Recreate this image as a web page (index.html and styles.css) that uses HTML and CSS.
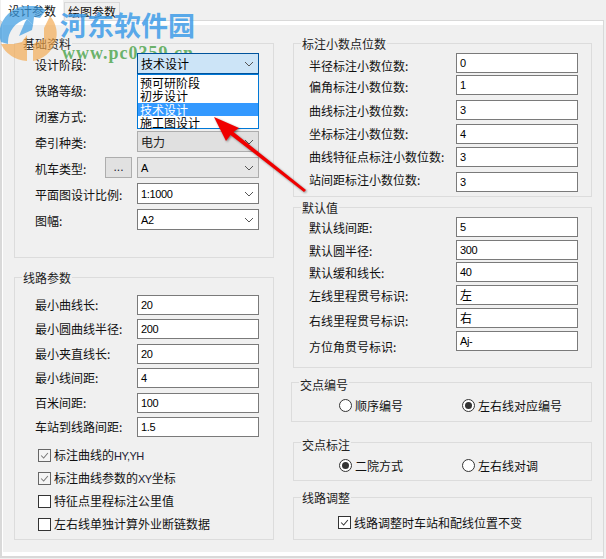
FILE: index.html
```html
<!DOCTYPE html>
<html lang="zh">
<head>
<meta charset="utf-8">
<title>设计参数</title>
<link rel="stylesheet" href="styles.css">
</head>
<body>
<div class="page">
  <div class="tabs">
    <div class="tab tab-active">设计参数</div>
    <div class="tab">绘图参数</div>
  </div>
  <div class="panel">
    <div class="inner">
      <div class="col col-left">
        <section class="group g-basic">
          <div class="legend">基础资料</div>
          <div class="rows rows-basic">
            <div class="row"><span class="label">设计阶段:</span><div class="select focused"><span>技术设计</span><svg class="chev" viewBox="0 0 10 6"><path d="M1 1l4 4 4-4"/></svg>
              <div class="dropdown">
                <div class="opt">预可研阶段</div>
                <div class="opt">初步设计</div>
                <div class="opt opt-on">技术设计</div>
                <div class="opt">施工图设计</div>
              </div>
            </div></div>
            <div class="row"><span class="label">铁路等级:</span><div class="select"></div></div>
            <div class="row"><span class="label">闭塞方式:</span><div class="select"></div></div>
            <div class="row"><span class="label">牵引种类:</span><div class="select disabled"><span>电力</span><svg class="chev" viewBox="0 0 10 6"><path d="M1 1l4 4 4-4"/></svg></div></div>
            <div class="row"><span class="label label-short">机车类型:</span><div class="btn">...</div><div class="select soft"><span class="num">A</span><svg class="chev" viewBox="0 0 10 6"><path d="M1 1l4 4 4-4"/></svg></div></div>
            <div class="row"><span class="label">平面图设计比例:</span><div class="select"><span class="num">1:1000</span><svg class="chev" viewBox="0 0 10 6"><path d="M1 1l4 4 4-4"/></svg></div></div>
            <div class="row"><span class="label">图幅:</span><div class="select"><span class="num">A2</span><svg class="chev" viewBox="0 0 10 6"><path d="M1 1l4 4 4-4"/></svg></div></div>
          </div>
        </section>
        <section class="group g-line">
          <div class="legend">线路参数</div>
          <div class="rows rows-line">
            <div class="row row-input"><span class="label">最小曲线长:</span><div class="input num">20</div></div>
            <div class="row row-input"><span class="label">最小圆曲线半径:</span><div class="input num">200</div></div>
            <div class="row row-input"><span class="label">最小夹直线长:</span><div class="input num">20</div></div>
            <div class="row row-input"><span class="label">最小线间距:</span><div class="input num">4</div></div>
            <div class="row row-input"><span class="label">百米间距:</span><div class="input num">100</div></div>
            <div class="row row-input"><span class="label">车站到线路间距:</span><div class="input num">1.5</div></div>
          </div>
          <div class="checks">
            <div class="check"><span class="box box-soft"><svg viewBox="0 0 13 13"><path d="M2.5 6.5l3 3 5-6"/></svg></span><span>标注曲线的<span class="latin">HY,YH</span></span></div>
            <div class="check"><span class="box box-soft"><svg viewBox="0 0 13 13"><path d="M2.5 6.5l3 3 5-6"/></svg></span><span>标注曲线参数的<span class="latin">XY</span>坐标</span></div>
            <div class="check"><span class="box"></span><span>特征点里程标注公里值</span></div>
            <div class="check"><span class="box"></span><span>左右线单独计算外业断链数据</span></div>
          </div>
        </section>
      </div>
      <div class="col col-right">
        <section class="group g-decimals">
          <div class="legend">标注小数点位数</div>
          <div class="rows rows-right">
            <div class="row row-r"><span class="label label-r lo3">半径标注小数位数:</span><div class="input num">0</div></div>
            <div class="row row-r mt2"><span class="label label-r lo2">偏角标注小数位数:</span><div class="input num">1</div></div>
            <div class="row row-r mt5"><span class="label label-r lo1">曲线标注小数位数:</span><div class="input num">3</div></div>
            <div class="row row-r mt4"><span class="label label-r">坐标标注小数位数:</span><div class="input num">4</div></div>
            <div class="row row-r mt3"><span class="label label-r">曲线特征点标注小数位数:</span><div class="input num">3</div></div>
            <div class="row row-r mt5"><span class="label label-r hi2">站间距标注小数位数:</span><div class="input num">3</div></div>
          </div>
        </section>
        <section class="group g-default">
          <div class="legend">默认值</div>
          <div class="rows rows-right">
            <div class="row row-r"><span class="label label-r lo1">默认线间距:</span><div class="input num">5</div></div>
            <div class="row row-r mt3"><span class="label label-r lo1">默认圆半径:</span><div class="input num">300</div></div>
            <div class="row row-r mt2"><span class="label label-r lo1">默认缓和线长:</span><div class="input num">40</div></div>
            <div class="row row-r mt3"><span class="label label-r lo1">左线里程贯号标识:</span><div class="input">左</div></div>
            <div class="row row-r mt3"><span class="label label-r lo3">右线里程贯号标识:</span><div class="input">右</div></div>
            <div class="row row-r mt3"><span class="label label-r lo6">方位角贯号标识:</span><div class="input num">Aj-</div></div>
          </div>
        </section>
        <section class="group g-node">
          <div class="legend legend-low">交点编号</div>
          <div class="radios radios-node">
            <div class="radio-item"><span class="radio"></span><span>顺序编号</span></div>
            <div class="radio-item"><span class="radio radio-on"></span><span>左右线对应编号</span></div>
          </div>
        </section>
        <section class="group g-mark">
          <div class="legend legend-low">交点标注</div>
          <div class="radios radios-mark">
            <div class="radio-item"><span class="radio radio-on"></span><span>二院方式</span></div>
            <div class="radio-item"><span class="radio"></span><span>左右线对调</span></div>
          </div>
        </section>
        <section class="group g-adjust">
          <div class="legend">线路调整</div>
          <div class="check check-adjust"><span class="box"><svg viewBox="0 0 13 13"><path d="M2.5 6.5l3 3 5-6"/></svg></span><span>线路调整时车站和配线位置不变</span></div>
        </section>
      </div>
    </div>
  </div>

  <div class="watermark">
    <svg class="wm-logo" viewBox="0 0 62 56">
      <path class="wm-blue" d="M1 36A30 28 0 0 1 46 4L40 12 34 11 33 19 27 13A24 24 0 0 0 8 38Z"/>
      <path class="wm-blue" d="M27 13L33 19 32 24 19 30 25 16Z"/>
      <path class="wm-orange" d="M1 38L14 38 22 36 27 29 27 55A30 28 0 0 1 1 38Z"/>
      <path class="wm-orange" d="M33 55L33 38 44 33 44 22 50 10A30 28 0 0 1 33 55Z"/>
    </svg>
    <div class="wm-title">河东软件园</div>
    <div class="wm-url">www.pc0359.cn</div>
  </div>

  <svg class="arrow" viewBox="0 0 110 90">
    <path d="M8 12L33 23 27.500 27 100 85 98 87 24.500 30 20 36Z"/>
  </svg>
</div>
</body>
</html>
```
FILE: styles.css
```css
* { box-sizing: border-box; }
html, body { margin: 0; padding: 0; }
body {
  width: 606px;
  height: 559px;
  overflow: hidden;
  background: #f0f0f0;
  color: #111;
  font-family: "Noto Sans CJK SC", "Liberation Sans", sans-serif;
  font-size: 12px;
  line-height: 14px;
}
.page { position: relative; width: 606px; height: 559px; }

/* tabs */
.tabs { display: flex; height: 21px; padding-left: 1px; }
.tab {
  width: 56px;
  margin-top: 2px;
  margin-left: 1px;
  border: 1px solid #d9d9d9;
  border-bottom: 0;
  text-align: center;
  line-height: 18px;
}
.tab-active {
  width: 62px;
  margin-top: 0;
  margin-left: 0;
  background: #fff;
  border-color: #fff;
  line-height: 20px;
  position: relative;
  z-index: 1;
}

/* panel */
.panel {
  width: 604px;
  height: 538px;
  margin-top: -1px;
  border: 1px solid #d9d9d9;
  border-left-width: 2px;
  border-bottom-width: 2px;
}
.inner {
  display: flex;
  gap: 19px;
  height: 100%;
  padding: 18px 0 0 11px;
  border: solid #fff;
  border-width: 4px 0 4px 1px;
}
.col { display: flex; flex-direction: column; }
.col-left { width: 260px; }
.col-right { width: 299px; }

/* groups */
.group { border: 1px solid #dcdcdc; }
.legend {
  width: fit-content;
  margin: -7px 0 0 7px;
  padding: 0 1px;
  background: #f0f0f0;
  color: #222;
}
.legend-low { margin-top: -5px; }
.g-basic { height: 215px; }
.g-line { height: 263px; margin-top: 19px; }
.g-decimals { height: 154px; }
.g-default { height: 161px; margin-top: 10px; }
.g-node { height: 40px; margin-top: 14px; margin-left: -2px; }
.g-mark { height: 39px; margin-top: 20px; }
.g-adjust { height: 43px; margin-top: 16px; }

/* rows */
.rows { display: flex; flex-direction: column; padding-left: 20px; }
.rows-basic { margin-top: 2px; gap: 5px; }
.rows-line { margin-top: 10px; gap: 4.4px; }
.rows-right { margin-top: 2px; padding-left: 15px; }
.row { display: flex; align-items: center; height: 21px; }
.row-input, .row-r { height: 20px; }
.label { flex: none; width: 102px; white-space: nowrap; }
.rows-basic .label { padding-top: 3px; }
.rows-basic .label-short { width: 70px; }
.label-r { width: 147px; }
.lo1 { padding-top: 2px; }
.lo2 { padding-top: 4px; }
.lo3 { padding-top: 6px; }
.lo6 { padding-top: 12px; }
.hi2 { padding-bottom: 4px; }
.mt2 { margin-top: 2px; }
.mt3 { margin-top: 3px; }
.mt4 { margin-top: 4px; }
.mt5 { margin-top: 5px; }

/* controls */
.input, .select {
  flex: none;
  width: 122px;
  height: 100%;
  display: flex;
  align-items: center;
  padding-left: 3px;
  background: #fff;
  border: 1px solid #7a7a7a;
  white-space: nowrap;
  color: #000;
}
.select { position: relative; z-index: 2; }
.select span { flex: 1; }
.num {
  font-family: "Liberation Sans", sans-serif;
  font-size: 11px;
  letter-spacing: -0.35px;
}
.latin {
  font-family: "Liberation Sans", sans-serif;
  font-size: 11px;
  letter-spacing: -0.5px;
  color: #223;
}
.chev { flex: none; width: 10px; height: 6px; margin-right: 4px; }
.chev path { fill: none; stroke: #555; stroke-width: 1; }
.focused { background: #cce4f7; border-color: #00539c; z-index: 4; }
.disabled { background: #e0e0e0; border-color: #adadad; color: #222; }
.soft { background: #e6e6e6; border-color: #adadad; }
.btn {
  flex: none;
  width: 27px;
  height: 21px;
  margin: -1px 5px 0 0;
  background: #e1e1e1;
  border: 1px solid #adadad;
  text-align: center;
  font-family: "Liberation Sans", sans-serif;
  line-height: 19px;
  color: #223;
}

/* dropdown */
.dropdown {
  position: absolute;
  left: -1px;
  top: 20px;
  width: 122px;
  height: 55px;
  padding-top: 1px;
  background: #fff;
  border: 1px solid #0078d7;
}
.opt { height: 13.25px; padding-left: 2px; line-height: 13px; color: #000; }
.opt-on { background: #3399ff; color: #fff; }

/* checks */
.checks {
  display: flex;
  flex-direction: column;
  gap: 10px;
  margin-top: 12px;
  padding-left: 23px;
}
.check { display: flex; align-items: center; gap: 3px; height: 13px; white-space: nowrap; }
.box {
  flex: none;
  width: 13px;
  height: 13px;
  background: #fff;
  border: 1px solid #333;
}
.box svg { display: block; width: 11px; height: 11px; }
.box path { fill: none; stroke: #333; stroke-width: 1.2; }
.box-soft { background: #f4f4f4; border-color: #666; }
.box-soft path { stroke: #777; }
.check-adjust { margin: 11px 0 0 44px; }

/* radios */
.radios { display: grid; grid-template-columns: 123px auto; justify-content: start; }
.radios-node { margin: 7px 0 0 47px; }
.radios-mark { margin: 7px 0 0 45px; }
.radio-item { display: flex; align-items: center; gap: 3px; height: 13px; white-space: nowrap; }
.radio {
  flex: none;
  display: flex;
  align-items: center;
  justify-content: center;
  width: 13px;
  height: 13px;
  background: #fff;
  border: 1px solid #333;
  border-radius: 50%;
}
.radio-on::after {
  content: "";
  width: 7px;
  height: 7px;
  border-radius: 50%;
  background: #333;
}

/* overlays */
.watermark {
  position: absolute;
  left: 0;
  top: 0;
  width: 200px;
  height: 65px;
  z-index: 1;
  pointer-events: none;
}
.wm-logo { position: absolute; left: 0; top: 6px; width: 62px; height: 56px; }
.wm-blue { fill: #3d9de2; fill-opacity: .72; }
.wm-orange { fill: #f3a64a; fill-opacity: .65; }
.wm-title {
  position: absolute;
  left: 60px;
  top: 7px;
  font-size: 27px;
  line-height: 36px;
  font-weight: 700;
  white-space: nowrap;
  color: rgba(62, 156, 232, .85);
}
.wm-url {
  position: absolute;
  left: 62px;
  top: 43px;
  font-family: "Liberation Serif", serif;
  font-size: 18px;
  line-height: 20px;
  font-weight: 700;
  letter-spacing: 1px;
  white-space: nowrap;
  color: rgba(88, 170, 88, .9);
}
.arrow {
  position: absolute;
  left: 206px;
  top: 105px;
  width: 110px;
  height: 90px;
  z-index: 5;
  overflow: visible;
  filter: drop-shadow(1px 1px 1px rgba(0, 0, 0, .45));
}
.arrow path { fill: #f00000; }
```
